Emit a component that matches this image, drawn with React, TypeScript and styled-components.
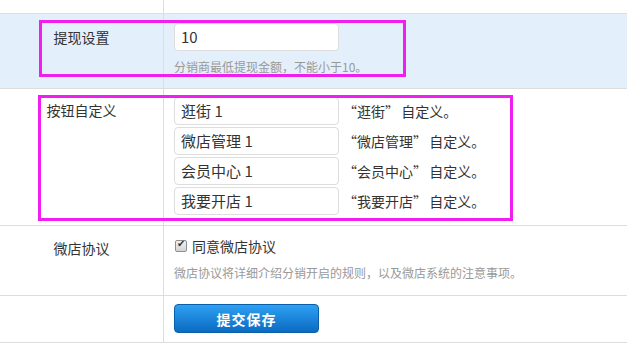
import React from "react";
import styled, { createGlobalStyle } from "styled-components";

const GlobalStyle = createGlobalStyle`
  body {
    margin: 0;
    background: #fff;
    font-family: "Noto Sans CJK SC", "Noto Sans", sans-serif;
    color: #333;
  }
`;

const Table = styled.div`
  width: 627px;
`;

const Row = styled.div<{ $h: number; $bg?: string }>`
  position: relative;
  display: grid;
  grid-template-columns: 164px 1fr;
  height: ${(p) => p.$h}px;
  background: ${(p) => p.$bg || "#fff"};
  border-bottom: 1px solid #ddd;
`;

const Label = styled.div<{ $top: number }>`
  border-right: 1px solid #ddd;
  text-align: center;
  font-size: 14px;
  line-height: 28px;
  padding-top: ${(p) => p.$top}px;
`;

const Cell = styled.div<{ $top: number }>`
  padding: ${(p) => p.$top}px 0 0 10px;
  display: flex;
  flex-direction: column;
`;

const Input = styled.div`
  box-sizing: border-box;
  width: 165px;
  height: 28px;
  border: 1px solid #ddd;
  border-radius: 4px;
  background: #fff;
  padding: 0 6px;
  font-size: 15px;
  line-height: 26px;
  color: #333;
`;

const Hint = styled.div<{ $mt: number }>`
  margin-top: ${(p) => p.$mt}px;
  font-size: 12px;
  color: #999;
  line-height: 16px;
`;

const FieldLine = styled.div`
  display: flex;
  align-items: center;
  height: 30px;
  gap: 4px;
`;

const Desc = styled.span`
  font-size: 14px;
  color: #333;
  white-space: pre;
`;

const CheckLine = styled.label`
  display: flex;
  align-items: center;
  font-size: 14px;
  line-height: 20px;
  gap: 5px;
`;

const Check = styled.input`
  appearance: none;
  position: relative;
  margin: 0 0 0 1px;
  width: 12px;
  height: 12px;
  border: 1px solid #8f8f8f;
  border-radius: 2px;
  background: linear-gradient(#f2f2f2, #d4d4d4);

  &:checked::after {
    content: "✔";
    position: absolute;
    left: 1px;
    top: -3px;
    font-size: 10px;
    color: #333;
  }
`;

const SaveButton = styled.button`
  width: 145px;
  height: 29px;
  border: 1px solid #0b5ea8;
  border-radius: 4px;
  background: linear-gradient(#2ea0f3, #0a6bc2);
  color: #fff;
  font-family: inherit;
  font-size: 14px;
  font-weight: bold;
  letter-spacing: 1px;
  padding: 0;
`;

const Highlight = styled.div<{ $x: number; $y: number; $w: number; $h: number }>`
  position: absolute;
  left: ${(p) => p.$x}px;
  top: ${(p) => p.$y}px;
  width: ${(p) => p.$w}px;
  height: ${(p) => p.$h}px;
  box-sizing: border-box;
  border: 3px solid #f01ff0;
  pointer-events: none;
`;

const buttons = ["逛街", "微店管理", "会员中心", "我要开店"];

export default function App() {
  return (
    <>
      <GlobalStyle />
      <Table>
        <Row $h={13}>
          <Label $top={0} />
          <Cell $top={0} />
        </Row>
        <Row $h={74} $bg="#e3effb">
          <Label $top={9}>提现设置</Label>
          <Cell $top={9}>
            <Input>10</Input>
            <Hint $mt={8}>分销商最低提现金额，不能小于10。</Hint>
          </Cell>
          <Highlight $x={39} $y={6} $w={367} $h={57} />
        </Row>
        <Row $h={136}>
          <Label $top={7}>按钮自定义</Label>
          <Cell $top={7}>
            {buttons.map((b) => (
              <FieldLine key={b}>
                <Input>{b} 1</Input>
                <Desc>“{b}”{"\u2006"}自定义。</Desc>
              </FieldLine>
            ))}
          </Cell>
          <Highlight $x={38} $y={6} $w={475} $h={126} />
        </Row>
        <Row $h={69}>
          <Label $top={8}>微店协议</Label>
          <Cell $top={10}>
            <CheckLine>
              <Check type="checkbox" defaultChecked />
              同意微店协议
            </CheckLine>
            <Hint $mt={9}>微店协议将详细介绍分销开启的规则，以及微店系统的注意事项。</Hint>
          </Cell>
        </Row>
        <Row $h={46}>
          <Label $top={0} />
          <Cell $top={8}>
            <SaveButton>提交保存</SaveButton>
          </Cell>
        </Row>
      </Table>
    </>
  );
}
